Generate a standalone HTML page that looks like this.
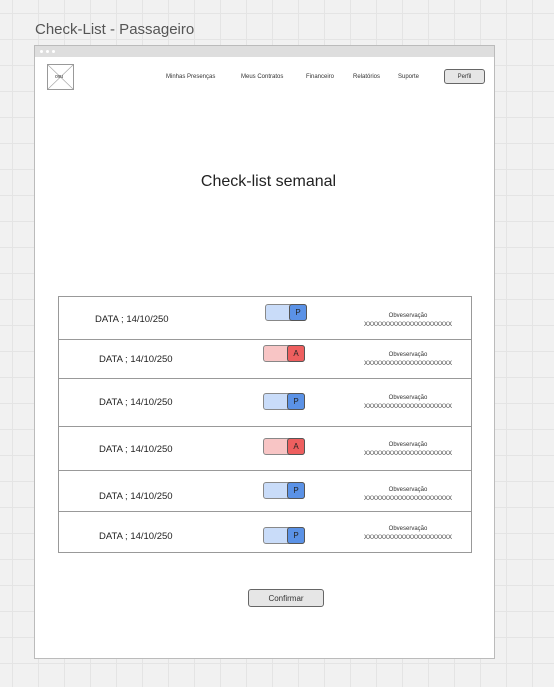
<!DOCTYPE html>
<html><head><meta charset="utf-8"><style>
*{margin:0;padding:0;box-sizing:border-box}
body{width:554px;height:687px;overflow:hidden;position:relative;font-family:"Liberation Sans",sans-serif;
background-color:#f1f1f1;
background-image:linear-gradient(to right,#e4e4e4 1px,transparent 1px),linear-gradient(to bottom,#e4e4e4 1px,transparent 1px);
background-size:26px 26px;background-position:12px 13px;}
.t{position:absolute;left:35px;top:21px;font-size:15px;color:#555}
.win{position:absolute;left:34px;top:45px;width:461px;height:614px;background:#fff;border:1px solid #bbb}
.bar{height:11px;background:#dedede;position:relative}
.bar i{position:absolute;top:4px;width:3px;height:3px;border-radius:50%;background:#fff}
.a{position:absolute;font-size:6px;color:#333}
.logo{position:absolute;left:12px;top:18px;width:27px;height:26px;border:1px solid #999}
.btn{position:absolute;border:1px solid #666;border-radius:3px;background:#e6e6e6;text-align:center;color:#333}
.tbl{position:absolute;left:23px;top:250px;width:414px;height:257px;border:1px solid #999}
.row{position:absolute;left:0;width:412px;border-bottom:1px solid #999}
.d{position:absolute;font-size:9.5px;color:#222}
.tg{position:absolute;width:42px;height:17px;border:1px solid #888;border-radius:3px}
.tg b{position:absolute;right:-1px;top:-1px;width:18px;height:17px;border:1px solid #555;border-radius:3px;font-weight:normal;font-size:8px;text-align:center;line-height:15px;color:#222}
.o{position:absolute;font-size:6px;color:#333;text-align:center;line-height:9px;width:100px}
</style></head><body>
<div class="t">Check-List - Passageiro</div>
<div class="win">
<div class="bar"><i style="left:5px"></i><i style="left:11px"></i><i style="left:17px"></i></div>
<div class="logo"><svg width="25" height="24"><line x1="0" y1="0" x2="25" y2="24" stroke="#aaa" stroke-width=".7"/><line x1="25" y1="0" x2="0" y2="24" stroke="#aaa" stroke-width=".7"/></svg><span class="a" style="left:7px;top:9px;font-size:5px">ovu</span></div>
<span class="a" style="left:131px;top:28px">Minhas Presenças</span>
<span class="a" style="left:206px;top:28px">Meus Contratos</span>
<span class="a" style="left:271px;top:28px">Financeiro</span>
<span class="a" style="left:318px;top:28px">Relatórios</span>
<span class="a" style="left:363px;top:28px">Suporte</span>
<div class="btn" style="left:409px;top:23px;width:41px;height:15px;font-size:6px;line-height:14px">Perfil</div>
<div style="position:absolute;left:3px;width:461px;top:127px;text-align:center;font-size:16px;color:#222">Check-list semanal</div>
<div class="tbl">
<div class="row" style="top:0;height:43px"><span class="d" style="left:36px;top:17px">DATA ; 14/10/250</span><div class="tg" style="left:206px;top:7px;background:#c9dcf9"><b style="background:#5b92e6">P</b></div><div class="o" style="left:299px;top:15px">Obveservação<br>XXXXXXXXXXXXXXXXXXXXXX</div></div>
<div class="row" style="top:43px;height:39px"><span class="d" style="left:40px;top:14px">DATA ; 14/10/250</span><div class="tg" style="left:204px;top:5px;background:#f8c5c5"><b style="background:#ee5f5f">A</b></div><div class="o" style="left:299px;top:11px">Obveservação<br>XXXXXXXXXXXXXXXXXXXXXX</div></div>
<div class="row" style="top:82px;height:48px"><span class="d" style="left:40px;top:18px">DATA ; 14/10/250</span><div class="tg" style="left:204px;top:14px;background:#c9dcf9"><b style="background:#5b92e6">P</b></div><div class="o" style="left:299px;top:15px">Obveservação<br>XXXXXXXXXXXXXXXXXXXXXX</div></div>
<div class="row" style="top:130px;height:44px"><span class="d" style="left:40px;top:17px">DATA ; 14/10/250</span><div class="tg" style="left:204px;top:11px;background:#f8c5c5"><b style="background:#ee5f5f">A</b></div><div class="o" style="left:299px;top:14px">Obveservação<br>XXXXXXXXXXXXXXXXXXXXXX</div></div>
<div class="row" style="top:174px;height:41px"><span class="d" style="left:40px;top:20px">DATA ; 14/10/250</span><div class="tg" style="left:204px;top:11px;background:#c9dcf9"><b style="background:#5b92e6">P</b></div><div class="o" style="left:299px;top:15px">Obveservação<br>XXXXXXXXXXXXXXXXXXXXXX</div></div>
<div class="row" style="top:215px;height:41px;border-bottom:none"><span class="d" style="left:40px;top:19px">DATA ; 14/10/250</span><div class="tg" style="left:204px;top:15px;background:#c9dcf9"><b style="background:#5b92e6">P</b></div><div class="o" style="left:299px;top:13px">Obveservação<br>XXXXXXXXXXXXXXXXXXXXXX</div></div>
</div>
<div class="btn" style="left:213px;top:543px;width:76px;height:18px;font-size:8px;line-height:17px">Confirmar</div>
</div>
</body></html>
